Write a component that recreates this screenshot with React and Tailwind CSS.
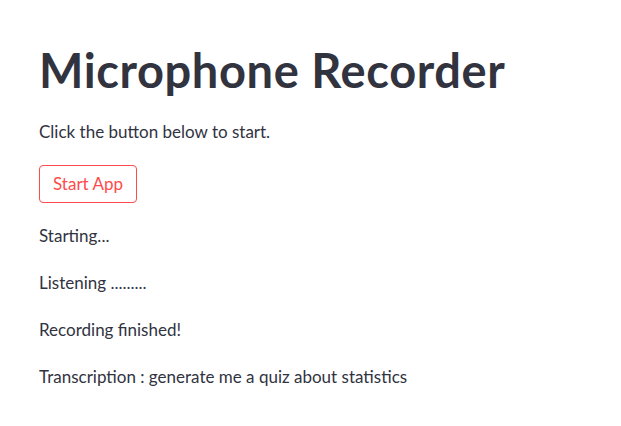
import React from "react";

const lines = [
  "Starting...",
  "Listening .........",
  "Recording finished!",
  "Transcription : generate me a quiz about statistics",
];

export default function App() {
  return (
    <div className="min-h-screen bg-white text-[#31333f] font-['Lato',sans-serif]">
      <div className="flex flex-col items-start px-[39px] pt-[44px]">
        {/* Title */}
        <h1 className="text-[47px] font-bold leading-[53px] tracking-[0.6px]">
          Microphone Recorder
        </h1>
        <p className="mt-[22px] text-[17px] leading-[26px]">
          Click the button below to start.
        </p>
        <button className="mt-[20px] h-[38px] w-[98px] flex items-center justify-center rounded-[4px] border border-[#ff4b4b] text-[#ff4b4b] text-[17px] bg-white">
          Start App
        </button>
        <div className="mt-[20px] flex flex-col gap-[21px] text-[17px] leading-[26px]">
          {lines.map((line) => (
            <p key={line}>{line}</p>
          ))}
        </div>
      </div>
    </div>
  );
}
